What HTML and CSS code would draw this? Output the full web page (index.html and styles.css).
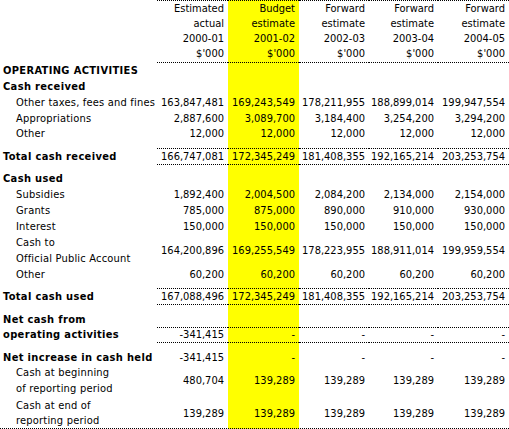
FILE: index.html
```html
<!DOCTYPE html>
<html lang="en">
<head>
  <meta charset="UTF-8">
  <title>Cash flow statement</title>
  <link rel="stylesheet" href="styles.css">
</head>
<body>
  <div class="statement">
    <div class="row head">
      <div class="lbl"></div>
      <div class="n">Estimated<br>actual<br>2000-01<br>$'000</div>
      <div class="n">Budget<br>estimate<br>2001-02<br>$'000</div>
      <div class="n">Forward<br>estimate<br>2002-03<br>$'000</div>
      <div class="n">Forward<br>estimate<br>2003-04<br>$'000</div>
      <div class="n">Forward<br>estimate<br>2004-05<br>$'000</div>
    </div>

    <div class="row h16"><div class="lbl b">OPERATING ACTIVITIES</div></div>
    <div class="row h16"><div class="lbl b">Cash received</div></div>
    <div class="row h16 item">
      <div class="lbl">Other taxes, fees and fines</div>
      <div class="n">163,847,481</div><div class="n">169,243,549</div><div class="n">178,211,955</div><div class="n">188,899,014</div><div class="n">199,947,554</div>
    </div>
    <div class="row item">
      <div class="lbl">Appropriations</div>
      <div class="n">2,887,600</div><div class="n">3,089,700</div><div class="n">3,184,400</div><div class="n">3,254,200</div><div class="n">3,294,200</div>
    </div>
    <div class="row item">
      <div class="lbl">Other</div>
      <div class="n">12,000</div><div class="n">12,000</div><div class="n">12,000</div><div class="n">12,000</div><div class="n">12,000</div>
    </div>
    <div class="row total gap7">
      <div class="lbl b">Total cash received</div>
      <div class="n">166,747,081</div><div class="n">172,345,249</div><div class="n">181,408,355</div><div class="n">192,165,214</div><div class="n">203,253,754</div>
    </div>

    <div class="row h16 gap6"><div class="lbl b">Cash used</div></div>
    <div class="row h16 item">
      <div class="lbl">Subsidies</div>
      <div class="n">1,892,400</div><div class="n">2,004,500</div><div class="n">2,084,200</div><div class="n">2,134,000</div><div class="n">2,154,000</div>
    </div>
    <div class="row h16 item">
      <div class="lbl">Grants</div>
      <div class="n">785,000</div><div class="n">875,000</div><div class="n">890,000</div><div class="n">910,000</div><div class="n">930,000</div>
    </div>
    <div class="row h16 item">
      <div class="lbl">Interest</div>
      <div class="n">150,000</div><div class="n">150,000</div><div class="n">150,000</div><div class="n">150,000</div><div class="n">150,000</div>
    </div>
    <div class="row h16 item">
      <div class="lbl">Cash to<br>Official Public Account</div>
      <div class="n">164,200,896</div><div class="n">169,255,549</div><div class="n">178,223,955</div><div class="n">188,911,014</div><div class="n">199,959,554</div>
    </div>
    <div class="row item">
      <div class="lbl">Other</div>
      <div class="n">60,200</div><div class="n">60,200</div><div class="n">60,200</div><div class="n">60,200</div><div class="n">60,200</div>
    </div>
    <div class="row total gap6">
      <div class="lbl b">Total cash used</div>
      <div class="n">167,088,496</div><div class="n">172,345,249</div><div class="n">181,408,355</div><div class="n">192,165,214</div><div class="n">203,253,754</div>
    </div>

    <div class="row net-from"><div class="lbl b">Net cash from</div></div>
    <div class="row total net">
      <div class="lbl b">operating activities</div>
      <div class="n">-341,415</div><div class="n">-</div><div class="n">-</div><div class="n">-</div><div class="n">-</div>
    </div>

    <div class="row gap7">
      <div class="lbl b">Net increase in cash held</div>
      <div class="n">-341,415</div><div class="n">-</div><div class="n">-</div><div class="n">-</div><div class="n">-</div>
    </div>
    <div class="row h16 item">
      <div class="lbl">Cash at beginning<br>of reporting period</div>
      <div class="n">480,704</div><div class="n">139,289</div><div class="n">139,289</div><div class="n">139,289</div><div class="n">139,289</div>
    </div>
    <div class="row item last">
      <div class="lbl">Cash at end of<br>reporting period</div>
      <div class="n">139,289</div><div class="n">139,289</div><div class="n">139,289</div><div class="n">139,289</div><div class="n">139,289</div>
    </div>
  </div>
</body>
</html>
```

FILE: styles.css
```css
body {
  margin: 0;
  background: #fff;
  color: #000;
  font-family: "DejaVu Sans Condensed", "DejaVu Sans", sans-serif;
  font-stretch: condensed;
  font-size: 11px;
}

.statement {
  width: 509px;
  /* budget year column is highlighted top to bottom */
  background: linear-gradient(to right, transparent 228px, #ff0 228px, #ff0 299px, transparent 299px);
}

.row {
  display: grid;
  grid-template-columns: 157px 71px 71px 70px 69px 71px;
  align-items: center;
  line-height: 15px;
  white-space: nowrap;
}

.h16 {
  line-height: 16px;
}

.lbl {
  padding-left: 3px;
  letter-spacing: 0.2px;
}

.b {
  font-weight: bold;
  letter-spacing: 0.35px;
}

.item .lbl {
  padding-left: 16px;
}

.n {
  text-align: right;
  padding-right: 4px;
}

.head .n {
  padding-bottom: 1px;
  border-top: 1px dotted #000;
  border-bottom: 1px dotted #000;
}

.total .n {
  border-top: 1px dotted #000;
  border-bottom: 1px dotted #000;
}

.gap6 {
  margin-top: 6px;
}

.gap7 {
  margin-top: 7px;
}

.net-from .lbl {
  padding-top: 7px;
}

.net {
  line-height: 14px;
}

.last {
  padding-top: 1px;
  border-bottom: 1px dotted #000;
}
```
